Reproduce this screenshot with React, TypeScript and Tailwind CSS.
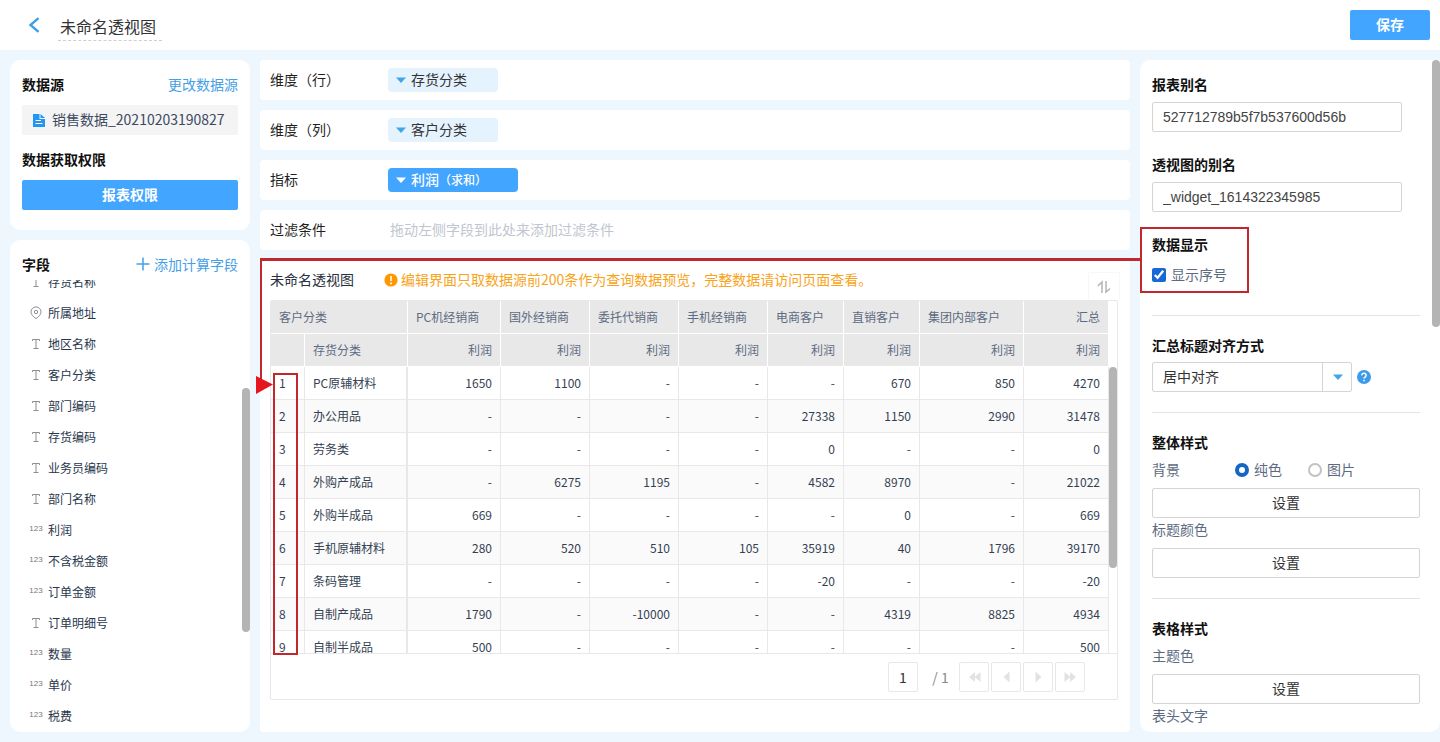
import React, { useState } from "react";

type FieldKind = "text" | "number" | "place";

const fields: { kind: FieldKind; name: string }[] = [
  { kind: "text", name: "存货名称" },
  { kind: "place", name: "所属地址" },
  { kind: "text", name: "地区名称" },
  { kind: "text", name: "客户分类" },
  { kind: "text", name: "部门编码" },
  { kind: "text", name: "存货编码" },
  { kind: "text", name: "业务员编码" },
  { kind: "text", name: "部门名称" },
  { kind: "number", name: "利润" },
  { kind: "number", name: "不含税金额" },
  { kind: "number", name: "订单金额" },
  { kind: "text", name: "订单明细号" },
  { kind: "number", name: "数量" },
  { kind: "number", name: "单价" },
  { kind: "number", name: "税费" },
];

const columns = [
  "PC机经销商",
  "国外经销商",
  "委托代销商",
  "手机经销商",
  "电商客户",
  "直销客户",
  "集团内部客户",
  "汇总",
];

const columnWidths = [34, 103, 93, 89, 89, 89, 76, 76, 104, 85];
const totalWidth = columnWidths.reduce((a, b) => a + b, 0);

const rows: [string, string[]][] = [
  ["PC原辅材料", ["1650", "1100", "-", "-", "-", "670", "850", "4270"]],
  ["办公用品", ["-", "-", "-", "-", "27338", "1150", "2990", "31478"]],
  ["劳务类", ["-", "-", "-", "-", "0", "-", "-", "0"]],
  ["外购产成品", ["-", "6275", "1195", "-", "4582", "8970", "-", "21022"]],
  ["外购半成品", ["669", "-", "-", "-", "-", "0", "-", "669"]],
  ["手机原辅材料", ["280", "520", "510", "105", "35919", "40", "1796", "39170"]],
  ["条码管理", ["-", "-", "-", "-", "-20", "-", "-", "-20"]],
  ["自制产成品", ["1790", "-", "-10000", "-", "-", "4319", "8825", "4934"]],
  ["自制半成品", ["500", "-", "-", "-", "-", "-", "-", "500"]],
];

function Caret({ className }: { className: string }) {
  return (
    <svg viewBox="0 0 10 6" className={`h-[6px] w-[10px] shrink-0 ${className}`} aria-hidden="true">
      <path d="M0 .5h10L5 6z" fill="currentColor" />
    </svg>
  );
}

function FieldIcon({ kind }: { kind: FieldKind }) {
  if (kind === "number") {
    return <span className="w-full text-center font-['Liberation_Sans',sans-serif] text-[8px] text-[#777]">123</span>;
  }
  if (kind === "place") {
    return (
      <svg viewBox="0 0 12 14" className="h-[14px] w-[12px]" fill="none" stroke="#8a8f96" aria-hidden="true">
        <path d="M6 12.6C3.4 10.8 1 8.600 1 5.900a5 5 0 0 1 10 0c0 2.700-2.400 4.900-5 6.700z" />
        <circle cx="6" cy="6" r="1.700" />
      </svg>
    );
  }
  return (
    <svg viewBox="0 0 10 12" className="h-[12px] w-[10px]" fill="none" stroke="#8a8f96" aria-hidden="true">
      <path d="M1.500 3V1.500h7V3M5 1.500v9M2.500 10.500h5" />
    </svg>
  );
}

function DropRow({ label, children }: { label: string; children: React.ReactNode }) {
  return (
    <div className="flex h-10 shrink-0 items-center rounded bg-white px-2.5">
      <span className="w-[118px] shrink-0 pb-0.5 text-[#1f1f1f]">{label}</span>
      {children}
    </div>
  );
}

function Heading({ children, htmlFor }: { children: React.ReactNode; htmlFor?: string }) {
  const cls = "block h-[30px] font-bold leading-[28px] text-[#111]";
  return htmlFor ? (
    <label htmlFor={htmlFor} className={cls}>
      {children}
    </label>
  ) : (
    <h2 className={cls}>{children}</h2>
  );
}

function SetRow({ label }: { label: string }) {
  return (
    <>
      <div className="h-6 leading-[22px] text-[#5d6b82]">{label}</div>
      <SetButton label={label} />
    </>
  );
}

function SetButton({ label }: { label: string }) {
  return (
    <button
      type="button"
      aria-label={`${label} 设置`}
      className="mt-1.5 block h-[30px] w-full rounded-xs border border-[#d4d4d4] bg-white pb-0.5 text-[#333]"
    >
      设置
    </button>
  );
}

function Divider({ first = false }: { first?: boolean }) {
  return <hr className={`mb-[15px] border-[#e3e3e3] ${first ? "mt-[25px]" : "mt-5"}`} />;
}

const pagers: { label: string; d: string }[] = [
  { label: "首页", d: "M7 1v10L1 6zM12.500 1v10L6.500 6z" },
  { label: "上一页", d: "M9.500 .5v11L3.500 6z" },
  { label: "下一页", d: "M3.500 .5v11L9.500 6z" },
  { label: "末页", d: "M.5 1v10L6.500 6zM6 1v10L12 6z" },
];

function PivotTable() {
  return (
    <table className="w-full table-fixed border-separate border-spacing-0 text-xs text-[#343f52]">
      <colgroup>
        {columnWidths.map((w, i) => (
          <col key={i} style={{ width: `${(w / totalWidth) * 100}%` }} />
        ))}
      </colgroup>
      <thead className="text-[#5d6b82]">
        <tr className="h-[33px]">
          <th colSpan={2} className="border-r border-b border-white bg-[#e8e8e8] px-2 py-0 text-left font-normal">
            客户分类
          </th>
          {columns.map((c) => (
            <th
              key={c}
              className="border-r border-b border-white bg-[#e8e8e8] px-2 py-0 text-left font-normal whitespace-nowrap last:text-right"
            >
              {c}
            </th>
          ))}
        </tr>
        <tr className="h-[33px]">
          <th aria-label="序号" className="border-r border-b border-white bg-[#e8e8e8] p-0" />
          <th className="border-r border-b border-white bg-[#e8e8e8] px-2 py-0 text-left font-normal">存货分类</th>
          {columns.map((c) => (
            <th key={c} className="border-r border-b border-white bg-[#e8e8e8] px-2 py-0 text-right font-normal">
              利润
            </th>
          ))}
        </tr>
      </thead>
      <tbody>
        {rows.map(([name, values], r) => (
          <tr key={name} className="h-[33px] even:bg-[#fafafb]">
            <td className="border-r border-b border-[#e8e8e8] px-2 py-0">{r + 1}</td>
            <td className="border-r-2 border-b border-[#e8e8e8] px-2 py-0 whitespace-nowrap">{name}</td>
            {values.map((v, i) => (
              <td key={i} className="border-r border-b border-[#e8e8e8] px-2 py-0 text-right">
                {v}
              </td>
            ))}
          </tr>
        ))}
      </tbody>
    </table>
  );
}

export default function App() {
  const [showIndex, setShowIndex] = useState(true);
  const [background, setBackground] = useState("color");

  return (
    <div className="flex h-screen flex-col overflow-hidden bg-[#eef7fe] font-['Noto_Sans_CJK_SC',sans-serif] text-sm">
      <header className="flex h-[50px] shrink-0 items-center bg-white px-2.5">
        <button type="button" aria-label="返回" className="ml-4 flex w-4 justify-center">
          <svg viewBox="0 0 12 16" className="h-4 w-3" fill="none" stroke="#3d9ee8" strokeWidth="2.400" aria-hidden="true">
            <path d="M10.500 1.200 2.500 8l8 6.800" />
          </svg>
        </button>
        <h1 className="mt-1 ml-4 border-b border-dashed border-[#cfcfcf] pr-1.5 pb-0.5 pl-0.5 text-base leading-6 text-[#333]">
          未命名透视图
        </h1>
        <button type="button" className="ml-auto h-[30px] w-20 rounded-xs bg-[#42a5ff] pb-0.5 font-bold text-white">
          保存
        </button>
      </header>

      <main className="flex min-h-0 flex-1 gap-2.5 py-2.5 pl-2.5">
        <aside className="flex w-60 shrink-0 flex-col gap-2.5">
          <section className="rounded-[10px] bg-white px-3 pt-2.5 pb-5">
            <div className="flex h-[30px] items-center justify-between pb-0.5">
              <h2 className="font-bold text-[#111]">数据源</h2>
              <a href="#source" className="text-[#45a0e6]">
                更改数据源
              </a>
            </div>
            <div className="mt-[5px] flex h-[30px] items-center gap-[7px] rounded-xs bg-[#f4f4f5] pl-[11px] text-[#3c4a60]">
              <svg viewBox="0 0 12 13" className="h-[13px] w-[12px] shrink-0" aria-hidden="true">
                <path d="M0 0h6.500v5H12v8H0z" fill="#2196f3" />
                <path d="M7.500 0 12 4H7.500z" fill="#2196f3" />
                <path d="M2.500 6.500H8M2.500 9.500h7" stroke="#fff" />
              </svg>
              <span className="pb-0.5">销售数据_20210203190827</span>
            </div>
            <h2 className="mt-2.5 h-[30px] font-bold leading-[28px] text-[#111]">数据获取权限</h2>
            <button
              type="button"
              className="mt-[5px] block h-[30px] w-full rounded-xs bg-[#42a5ff] pb-0.5 font-bold text-white"
            >
              报表权限
            </button>
          </section>

          <section className="relative flex min-h-0 flex-1 flex-col rounded-[10px] bg-white px-3 pt-2.5">
            <div className="flex h-[30px] shrink-0 items-center justify-between pb-0.5">
              <h2 className="font-bold text-[#111]">字段</h2>
              <button type="button" className="flex items-center gap-1 text-[#45a0e6]">
                <svg viewBox="0 0 14 14" className="size-3.5" stroke="currentColor" strokeWidth="1.500" aria-hidden="true">
                  <path d="M7 .5v13M.5 7h13" />
                </svg>
                添加计算字段
              </button>
            </div>
            <div className="min-h-0 flex-1 overflow-hidden">
              <ul className="-mt-3.5">
                {fields.map((f) => (
                  <li key={f.name} className="flex h-[31px] items-center pl-1.5 text-xs text-[#28364d]">
                    <span className="mr-1 flex w-4 items-center justify-center">
                      <FieldIcon kind={f.kind} />
                    </span>
                    {f.name}
                  </li>
                ))}
              </ul>
            </div>
            <div className="absolute top-[148px] right-0 h-[244px] w-2 rounded-full bg-[#b4b4b4]" />
          </section>
        </aside>

        <div className="flex min-w-0 flex-1 flex-col gap-2.5">
          <DropRow label="维度（行）">
            <button
              type="button"
              className="flex h-6 w-[110px] items-center gap-[5px] rounded bg-[#e5f3ff] pl-2 text-[#333]"
            >
              <Caret className="text-[#42a5e8]" />
              <span className="pb-0.5">存货分类</span>
            </button>
          </DropRow>
          <DropRow label="维度（列）">
            <button
              type="button"
              className="flex h-6 w-[110px] items-center gap-[5px] rounded bg-[#e5f3ff] pl-2 text-[#333]"
            >
              <Caret className="text-[#42a5e8]" />
              <span className="pb-0.5">客户分类</span>
            </button>
          </DropRow>
          <DropRow label="指标">
            <button
              type="button"
              className="flex h-6 w-[130px] items-center gap-[5px] rounded bg-[#42a5ff] pl-2 text-white"
            >
              <Caret className="text-white" />
              <span className="pb-0.5 font-medium">
                利润<span className="text-xs">（求和）</span>
              </span>
            </button>
          </DropRow>
          <DropRow label="过滤条件">
            <span className="pb-0.5 pl-0.5 text-[#c0c6d0]">拖动左侧字段到此处来添加过滤条件</span>
          </DropRow>

          <section className="relative flex min-h-0 flex-1 flex-col rounded bg-white pr-3 pb-8 pl-2.5">
            <div className="flex h-10 shrink-0 items-center">
              <h2 className="w-[114px] shrink-0 pb-0.5 text-[#28303c]">未命名透视图</h2>
              <p className="flex items-center gap-[3px] text-[#f9a319]">
                <svg viewBox="0 0 14 14" className="size-3.5 shrink-0" aria-hidden="true">
                  <circle cx="7" cy="7" r="6.600" fill="#ff9800" />
                  <path d="M7 3v5M7 9.500v1.700" stroke="#fff" strokeWidth="1.600" />
                </svg>
                <span className="pb-0.5">编辑界面只取数据源前200条作为查询数据预览，完整数据请访问页面查看。</span>
              </p>
              <button
                type="button"
                aria-label="排序"
                className="-mr-0.5 ml-auto flex h-7 w-8 items-center justify-center self-end rounded-xs border border-b-0 border-[#f7f7f8] bg-white"
              >
                <svg viewBox="0 0 14 14" className="size-3.5" fill="none" stroke="#b4b4b4" strokeWidth="1.500" aria-hidden="true">
                  <path d="M.8 6 5 2V13M9 1v11l4-3.500" />
                </svg>
              </button>
            </div>

            <div className="flex min-h-0 flex-1 flex-col rounded-xs border border-[#e6e8ec]">
              <div className="relative flex min-h-0 flex-1">
                <div className="min-w-0 flex-1 overflow-hidden">
                  <PivotTable />
                </div>
                <div className="w-2 pt-[66px]">
                  <div className="h-[201px] w-2 rounded-full bg-[#b4b4b4]" />
                </div>
                <div className="pointer-events-none absolute top-[72px] -bottom-0.5 left-0.5 w-[25px] border-2 border-[#c1272d]" />
              </div>
              <div className="flex shrink-0 items-center justify-end gap-0.5 border-t border-[#e6e8ec] pt-2 pr-8 pb-[7px]">
                <input
                  aria-label="页码"
                  defaultValue="1"
                  className="size-[30px] rounded-xs border border-[#e6e8ec] text-center text-[#333]"
                />
                <span className="w-[37px] pl-1 text-center text-[#8a8a8a]">/ 1</span>
                {pagers.map((p) => (
                  <button
                    key={p.label}
                    type="button"
                    aria-label={p.label}
                    className="flex size-[30px] items-center justify-center rounded-xs border border-[#e6e8ec]"
                  >
                    <svg viewBox="0 0 13 12" className="h-3 w-[13px]" fill="#e2e2e2" aria-hidden="true">
                      <path d={p.d} />
                    </svg>
                  </button>
                ))}
              </div>
            </div>

            <div className="pointer-events-none absolute -top-0.5 -right-[11px] left-0 h-[3px] bg-[#c1272d]" />
            <div className="pointer-events-none absolute -top-0.5 left-0 h-[126px] w-0.5 bg-[#c1272d]" />
            <svg viewBox="0 0 17 18" className="pointer-events-none absolute top-[116px] -left-1 h-[18px] w-[17px]" aria-hidden="true">
              <path d="M0 0 17 8.500 0 18z" fill="#e6141e" />
            </svg>
          </section>
        </div>

        <aside className="relative w-[300px] shrink-0 overflow-hidden rounded-[10px] rounded-tr-none bg-white pt-2.5 pr-5 pl-3">
          <Heading htmlFor="report-alias">报表别名</Heading>
          <input
            id="report-alias"
            defaultValue="527712789b5f7b537600d56b"
            className="mt-0.5 block h-[30px] w-[250px] rounded-xs border border-[#d4d4d4] px-2.5 font-['Liberation_Sans',sans-serif] text-[#444]"
          />
          <div className="mt-[18px]">
            <Heading htmlFor="pivot-alias">透视图的别名</Heading>
            <input
              id="pivot-alias"
              defaultValue="_widget_1614322345985"
              className="mt-0.5 block h-[30px] w-[250px] rounded-xs border border-[#d4d4d4] px-2.5 font-['Liberation_Sans',sans-serif] text-[#444]"
            />
          </div>
          <div className="relative mt-[18px]">
            <Heading>数据显示</Heading>
            <label className="flex h-[30px] items-center gap-[5px] text-[#5d6b82]">
              <input
                type="checkbox"
                checked={showIndex}
                onChange={(e) => setShowIndex(e.target.checked)}
                className="size-3.5 accent-[#1769d6]"
              />
              <span className="pb-0.5">显示序号</span>
            </label>
            <div className="pointer-events-none absolute -top-[3px] -bottom-[3px] -left-3 w-[109px] border-2 border-[#c1272d]" />
          </div>

          <Divider first />
          <Heading htmlFor="summary-align">汇总标题对齐方式</Heading>
          <div className="mt-px flex items-center gap-[5px]">
            <div className="relative">
              <select
                id="summary-align"
                className="block h-[30px] w-[200px] appearance-none rounded-xs border border-[#d4d4d4] bg-white px-2.5 pb-0.5 text-[#333]"
              >
                <option>居中对齐</option>
              </select>
              <span className="pointer-events-none absolute top-0 right-0 flex h-[30px] w-[30px] items-center justify-center border-l border-[#d4d4d4]">
                <Caret className="text-[#42a5e8]" />
              </span>
            </div>
            <svg viewBox="0 0 14 14" className="size-3.5" aria-hidden="true">
              <circle cx="7" cy="7" r="7" fill="#3d9bea" />
              <path d="M4.800 5.400a2.200 2.100 0 1 1 3.300 1.700c-.8.500-1.100.8-1.100 1.500M7 9.700v1.500" fill="none" stroke="#fff" strokeWidth="1.500" />
            </svg>
          </div>

          <Divider />
          <Heading>整体样式</Heading>
          <div className="flex h-6 items-center text-[#5d6b82]">
            <span className="w-[83px] pb-0.5">背景</span>
            <label className="flex w-[73px] items-center gap-[5px]">
              <input
                type="radio"
                name="background"
                checked={background === "color"}
                onChange={() => setBackground("color")}
                className="size-3.5 appearance-none rounded-full border-2 border-[#c2c2c2] bg-white checked:border-4 checked:border-[#1267c4]"
              />
              <span className="pb-0.5">纯色</span>
            </label>
            <label className="flex items-center gap-[5px]">
              <input
                type="radio"
                name="background"
                checked={background === "image"}
                onChange={() => setBackground("image")}
                className="size-3.5 appearance-none rounded-full border-2 border-[#c2c2c2] bg-white checked:border-4 checked:border-[#1267c4]"
              />
              <span className="pb-0.5">图片</span>
            </label>
          </div>
          <SetButton label="背景" />
          <SetRow label="标题颜色" />

          <Divider />
          <Heading>表格样式</Heading>
          <SetRow label="主题色" />
          <SetRow label="表头文字" />
          <div className="absolute top-0 right-0 h-[267px] w-2 rounded-full bg-[#b4b4b4]" />
        </aside>
      </main>
    </div>
  );
}
